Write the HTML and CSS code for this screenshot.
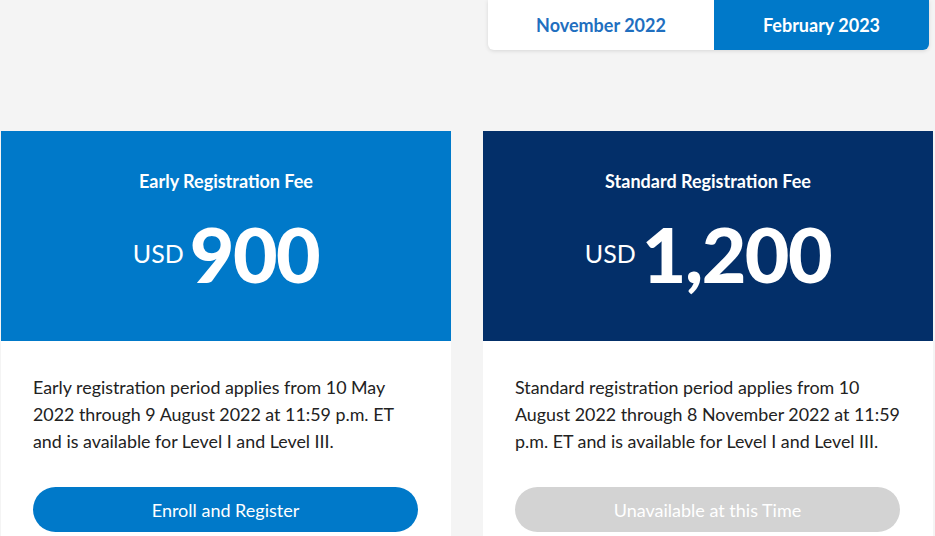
FILE: index.html
```html
<!DOCTYPE html>
<html>
<head>
<meta charset="utf-8">
<link rel="stylesheet" href="styles.css">
</head>
<body>
<div class="page">
  <div class="toggle-row">
    <div class="toggle">
      <div class="tab">November 2022</div>
      <div class="tab active">February 2023</div>
    </div>
  </div>
  <div class="cards">
    <div class="card">
      <div class="card-head early">
        <div class="card-title">Early Registration Fee</div>
        <div class="price"><span class="cur">USD</span><span class="amt">900</span></div>
      </div>
      <div class="card-body">
        <p class="desc">Early registration period applies from 10 May 2022 through 9 August 2022 at 11:59 p.m. ET and is available for Level I and Level III.</p>
        <div class="btn primary">Enroll and Register</div>
      </div>
    </div>
    <div class="card">
      <div class="card-head standard">
        <div class="card-title">Standard Registration Fee</div>
        <div class="price"><span class="cur">USD</span><span class="amt">1,200</span></div>
      </div>
      <div class="card-body">
        <p class="desc">Standard registration period applies from 10 August 2022 through 8 November 2022 at 11:59 p.m. ET and is available for Level I and Level III.</p>
        <div class="btn disabled">Unavailable at this Time</div>
      </div>
    </div>
  </div>
</div>
</body>
</html>
```
FILE: styles.css
```css
html, body {
  margin: 0;
  padding: 0;
  background: #f4f4f4;
  font-family: Lato, "Open Sans", sans-serif;
  overflow: hidden;
}
.page {
  width: 935px;
  height: 536px;
}
.toggle-row {
  display: flex;
  justify-content: flex-end;
  padding-right: 6px;
}
.toggle {
  display: flex;
  width: 441px;
  height: 50px;
  border-radius: 0 0 6px 6px;
  box-shadow: 0 1px 4px rgba(0,0,0,0.12);
  overflow: hidden;
  background: #fff;
}
.tab {
  display: flex;
  align-items: center;
  justify-content: center;
  font-weight: 700;
  font-size: 18px;
  color: #1f6fbf;
}
.tab:first-child { width: 226px; }
.tab.active {
  flex: 1;
  background: #0079c9;
  color: #fff;
}
.cards {
  display: flex;
  gap: 32px;
  padding-left: 1px;
  margin-top: 81px;
}
.card {
  width: 450px;
  background: #fff;
  height: 405px;
}
.card-head {
  height: 210px;
  display: flex;
  flex-direction: column;
  align-items: center;
  color: #fff;
  box-sizing: border-box;
  padding-top: 38px;
}
.card-head.early { background: #0079c9; }
.card-head.standard { background: #032f69; }
.card-title {
  font-weight: 700;
  font-size: 18px;
  line-height: 24px;
}
.price {
  display: flex;
  align-items: center;
  margin-top: 14px;
}
.cur {
  font-size: 25px;
  font-weight: 400;
  margin-right: 6px;
}
.amt {
  font-size: 77px;
  font-weight: 900;
  line-height: 92px;
  letter-spacing: -1.5px;
}
.card-body {
  padding: 33px 30px 0 32px;
}
.desc {
  margin: 0;
  font-size: 17.85px;
  line-height: 27px;
  color: #222;
}
.btn {
  margin-top: 32px;
  margin-right: 3px;
  height: 45px;
  border-radius: 23px;
  display: flex;
  align-items: center;
  justify-content: center;
  font-size: 18px;
  color: #fff;
}
.btn.primary { background: #0079c9; }
.btn.disabled { background: #d3d3d3; }
```
